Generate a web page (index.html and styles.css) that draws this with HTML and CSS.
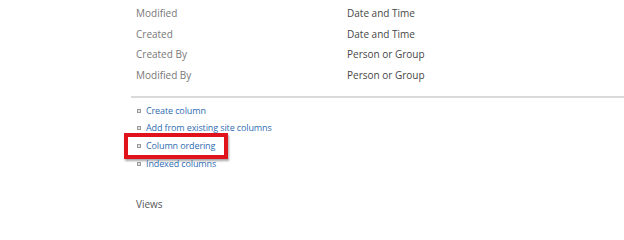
FILE: index.html
```html
<!DOCTYPE html>
<html lang="en">
<head>
<meta charset="utf-8">
<title>Columns</title>
<link rel="stylesheet" href="styles.css">
</head>
<body>
<div class="page">
  <div class="fields">
    <div class="row"><span class="name">Modified</span><span class="type">Date and Time</span></div>
    <div class="row"><span class="name">Created</span><span class="type">Date and Time</span></div>
    <div class="row"><span class="name">Created By</span><span class="type">Person or Group</span></div>
    <div class="row"><span class="name">Modified By</span><span class="type">Person or Group</span></div>
  </div>
  <div class="divider"></div>
  <ul class="links">
    <li><span class="bullet"></span><a href="#">Create column</a></li>
    <li><span class="bullet"></span><a href="#">Add from existing site columns</a></li>
    <li class="highlighted"><span class="bullet"></span><a href="#">Column ordering</a><span class="callout"></span></li>
    <li><span class="bullet"></span><a href="#">Indexed columns</a></li>
  </ul>
  <div class="views">Views</div>
</div>
</body>
</html>
```

FILE: styles.css
```css
html, body {
  margin: 0;
  padding: 0;
  background: #ffffff;
}

.page {
  font-family: "Open Sans", "Liberation Sans", sans-serif;
  padding-top: 3px;
}

.fields {
  padding-left: 136px;
}

.row {
  display: flex;
  height: 20.7px;
  line-height: 20.7px;
  font-size: 10px;
}

.name {
  width: 211px;
  color: #787878;
}

.type {
  color: #474747;
}

.divider {
  margin: 10px 0 0 131px;
  height: 2px;
  background: #dadada;
}

.links {
  list-style: none;
  margin: 4px 0 0 0;
  padding: 0 0 0 137px;
  font-size: 9px;
  letter-spacing: -0.12px;
}

.links li {
  position: relative;
  display: flex;
  align-items: center;
  height: 17.7px;
  line-height: 17.7px;
}

.bullet {
  width: 2px;
  height: 2px;
  border: 1px solid #9a9a9a;
  background: #e4e4e4;
  margin-right: 5px;
}

.links a {
  color: #2f6db2;
  text-decoration: none;
}

.callout {
  position: absolute;
  left: -13px;
  top: -4px;
  width: 96px;
  height: 18px;
  border: 4px solid #e0121c;
  box-shadow: 1px 2px 2px rgba(0, 0, 0, 0.35);
}

.views {
  margin: 23px 0 0 136px;
  font-size: 10px;
  line-height: 16px;
  color: #555555;
}
```
